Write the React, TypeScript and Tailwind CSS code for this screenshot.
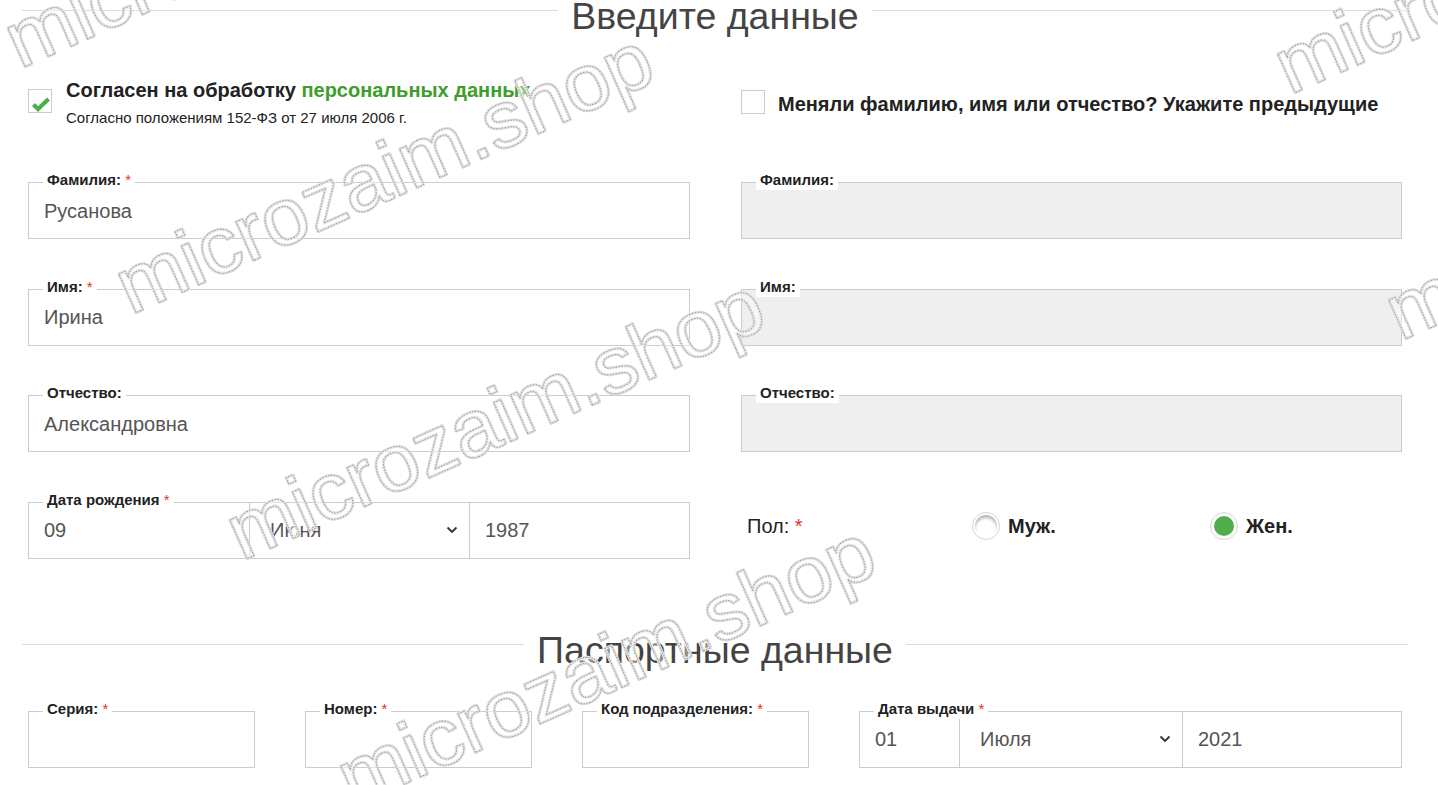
import React from "react";

const Req = () => <span className="text-[#d9352b] font-normal"> *</span>;

type FieldProps = {
  label: string;
  required?: boolean;
  value?: string;
  disabled?: boolean;
  children?: React.ReactNode;
};

const Field = ({ label, required, value, disabled, children }: FieldProps) => (
  <div
    className={`relative h-[57px] border border-[#cccccc] ${
      disabled ? "bg-[#efefef]" : "bg-white"
    }`}
  >
    <span className="absolute -top-[11px] left-[14px] z-10 bg-white px-[4px] pb-[2px] text-[15px] font-bold leading-[16px] text-[#222]">
      {label}
      {required && <Req />}
    </span>
    {children ? (
      children
    ) : (
      <div className="flex h-full items-center pl-[15px] text-[20px] text-[#555]">
        {value}
      </div>
    )}
  </div>
);

const Chevron = () => (
  <svg width="12" height="8" viewBox="0 0 12 8" className="shrink-0">
    <path d="M1.5 1.5 L6 6 L10.5 1.5" fill="none" stroke="#333" strokeWidth="1.8" />
  </svg>
);

const DateBox = ({
  day,
  month,
  year,
  cols,
}: {
  day: string;
  month: string;
  year: string;
  cols: string;
}) => (
  <div className={`grid h-full ${cols} text-[20px] text-[#555]`}>
    <div className="flex items-center pl-[15px]">{day}</div>
    <div className="flex items-center justify-between border-l border-[#cccccc] pl-[20px] pr-[11px]">
      <span>{month}</span>
      <Chevron />
    </div>
    <div className="flex items-center border-l border-[#cccccc] pl-[15px]">{year}</div>
  </div>
);

const Heading = ({ title }: { title: string }) => (
  <div className="flex w-[1386px] items-start">
    <div className="mt-[10px] h-px flex-1 bg-[#dddddd]" />
    <h2 className="px-[13px] text-[37.5px] leading-[32px] text-[#444]">{title}</h2>
    <div className="mt-[10px] h-px flex-1 bg-[#dddddd]" />
  </div>
);

const Radio = ({ checked, label }: { checked?: boolean; label: string }) => (
  <label className="flex items-center">
    <span className="flex h-[28px] w-[28px] items-center justify-center rounded-full border border-[#d4d4d4] bg-white">
      {checked ? (
        <span className="h-[20px] w-[20px] rounded-full bg-[#4fae4c]" />
      ) : (
        <span className="h-[22px] w-[22px] rounded-full bg-white shadow-[inset_0_3px_3px_rgba(0,0,0,0.28)]" />
      )}
    </span>
    <span className="ml-[8px] text-[20px] font-bold text-[#222]">{label}</span>
  </label>
);

// водяной знак поверх формы
const marks = [
  [20, 69],
  [131, 315],
  [242, 561],
  [353, 807],
  [1290, 95],
  [1401, 341],
];

const Watermark = () => (
  <svg
    className="pointer-events-none absolute inset-0"
    width="1438"
    height="785"
    viewBox="0 0 1438 785"
  >
    {marks.map(([x, y]) => (
      <g
        key={`${x}-${y}`}
        transform={`rotate(-24 ${x} ${y})`}
        fontFamily="'Liberation Sans', Arial, sans-serif"
        fontSize="80"
      >
        <text
          x={x}
          y={y}
          textLength="578"
          lengthAdjust="spacingAndGlyphs"
          fill="none"
          stroke="#dcdcdc"
          strokeWidth="3"
          strokeLinejoin="round"
        >
          microzaim.shop
        </text>
        <text
          x={x}
          y={y}
          textLength="578"
          lengthAdjust="spacingAndGlyphs"
          fill="#ffffff"
          fillOpacity="0.4"
          stroke="#a2a2a2"
          strokeWidth="1"
          strokeDasharray="1.4 1.4"
        >
          microzaim.shop
        </text>
      </g>
    ))}
  </svg>
);

export default function App() {
  return (
    <div className="relative h-[785px] w-[1438px] overflow-hidden bg-white font-['Liberation_Sans',Arial,sans-serif] text-[#222]">
      <div className="pl-[22px]">
        <Heading title="Введите данные" />
      </div>

      {/* согласие / смена ФИО */}
      <div className="mt-[47px] grid h-[103px] grid-cols-[662px_661px] gap-x-[51px] pl-[28px]">
        <div className="flex items-start">
          <span className="relative mt-[10px] h-[24px] w-[24px] shrink-0 border border-[#cccccc] bg-white">
            <svg width="24" height="24" viewBox="0 0 24 24" className="absolute -left-px -top-px">
              <path d="M5.5 15.5 L10 20 L20.5 10" fill="none" stroke="#4fae4c" strokeWidth="4.2" />
            </svg>
          </span>
          <div className="ml-[14px]">
            <p className="text-[20px] font-bold leading-[22px]">
              Согласен на обработку{" "}
              <a className="text-[#3f9d2d]">персональных данных</a>
            </p>
            <p className="mt-[8px] text-[15px] leading-[18px] text-[#222]">
              Согласно положениям 152-ФЗ от 27 июля 2006 г.
            </p>
          </div>
        </div>
        <div className="flex items-start">
          <span className="mt-[11px] h-[24px] w-[24px] shrink-0 border border-[#cccccc] bg-white" />
          <p className="ml-[13px] mt-[14px] text-[20px] font-bold leading-[22px]">
            Меняли фамилию, имя или отчество? Укажите предыдущие
          </p>
        </div>
      </div>

      {/* ФИО */}
      <div className="grid grid-cols-[662px_661px] gap-x-[51px] gap-y-[49.5px] pl-[28px]">
        <Field label="Фамилия:" required value="Русанова" />
        <Field label="Фамилия:" disabled />
        <Field label="Имя:" required value="Ирина" />
        <Field label="Имя:" disabled />
        <Field label="Отчество:" value="Александровна" />
        <Field label="Отчество:" disabled />
        <Field label="Дата рождения" required>
          <DateBox day="09" month="Июня" year="1987" cols="grid-cols-3" />
        </Field>
        <div className="grid h-[57px] grid-cols-[225px_238px_1fr] items-center pb-[8px] pl-[6px]">
          <span className="text-[20px] text-[#222]">
            Пол:<Req />
          </span>
          <Radio label="Муж." />
          <Radio label="Жен." checked />
        </div>
      </div>

      <div className="mt-[75px] pl-[22px]">
        <Heading title="Паспортные данные" />
      </div>

      {/* паспорт */}
      <div className="mt-[45px] grid grid-cols-[227px_227px_227px_543px] gap-x-[50px] pl-[28px]">
        <Field label="Серия:" required value="" />
        <Field label="Номер:" required value="" />
        <Field label="Код подразделения:" required value="" />
        <Field label="Дата выдачи" required>
          <DateBox day="01" month="Июля" year="2021" cols="grid-cols-[99px_223px_1fr]" />
        </Field>
      </div>

      <Watermark />
    </div>
  );
}
